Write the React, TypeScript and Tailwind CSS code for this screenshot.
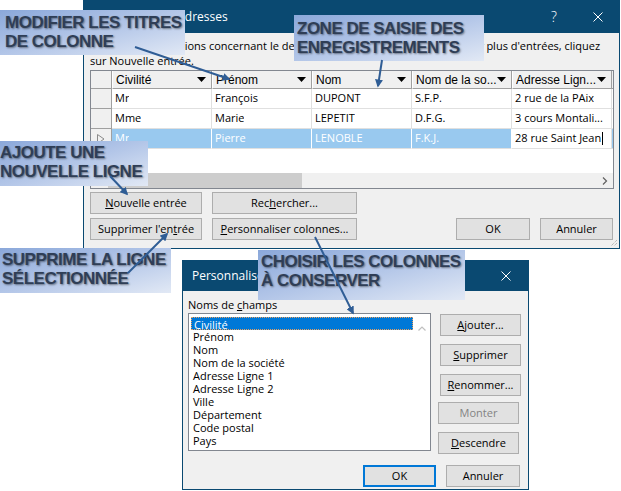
import type { ReactNode } from 'react';

const UI = "font-['Open_Sans','Noto_Sans',sans-serif]";
const CALLOUT =
  "absolute flex flex-col bg-gradient-to-br from-[#8ba8da] via-[#b3c6e8] to-[#e2e9f5] font-['Liberation_Sans',Arial,sans-serif] text-[17px] leading-[19px] font-bold tracking-[-0.5px] whitespace-nowrap text-[#2f3e56] [text-shadow:1px_1px_2px_rgba(0,0,0,0.45)]";

function Btn({
  children,
  className = '',
  disabled = false,
  focused = false,
}: {
  children: ReactNode;
  className?: string;
  disabled?: boolean;
  focused?: boolean;
}) {
  return (
    <div
      className={`flex h-[22px] shrink-0 items-center justify-center bg-[#e1e1e1] text-[11px] ${
        focused ? 'border-2 border-[#0078d7]' : 'border border-[#adadad]'
      } ${disabled ? 'text-[#838383]' : 'text-black'} ${className}`}
    >
      {children}
    </div>
  );
}

function CloseIcon({ size = 10 }: { size?: number }) {
  return (
    <svg width={size} height={size} viewBox="0 0 10 10" className="shrink-0">
      <path d="M0.5 0.5 L9.5 9.5 M9.5 0.5 L0.5 9.5" stroke="white" strokeWidth="1" />
    </svg>
  );
}

function Caret() {
  return (
    <svg width="9" height="5" viewBox="0 0 9 5" className="shrink-0">
      <path d="M0 0 H9 L4.5 5 Z" fill="#000" />
    </svg>
  );
}

const columns = ['Civilité', 'Prénom', 'Nom', 'Nom de la so...', 'Adresse Lign...'];

const rows = [
  ['Mr', 'François', 'DUPONT', 'S.F.P.', '2 rue de la PAix'],
  ['Mme', 'Marie', 'LEPETIT', 'D.F.G.', '3 cours Montali...'],
  ['Mr', 'Pierre', 'LENOBLE', 'F.K.J.', '28 rue Saint Jean'],
];

const fields = [
  'Civilité',
  'Prénom',
  'Nom',
  'Nom de la société',
  'Adresse Ligne 1',
  'Adresse Ligne 2',
  'Ville',
  'Département',
  'Code postal',
  'Pays',
];

function Grid() {
  return (
    <div className="mt-[2px] flex h-[119px] w-[524px] flex-col border border-[#828790] bg-white">
      {/* header */}
      <div className="flex h-[18px] shrink-0 bg-[#f0f0f0]">
        <div className="w-[21px] border-r border-b border-[#a0a0a0]" />
        {columns.map((c) => (
          <div
            key={c}
            className="flex w-[100px] items-center border-r border-b border-l border-r-[#a0a0a0] border-b-[#a0a0a0] border-l-white pr-[5px] pl-[3px] font-['Liberation_Sans_Narrow','Liberation_Sans',sans-serif] text-[12px] text-black"
          >
            <span className="flex-1 truncate">{c}</span>
            <Caret />
          </div>
        ))}
        <div className="flex-1 border-b border-[#a0a0a0]" />
      </div>
      {/* rows */}
      {rows.map((r, i) => {
        const sel = i === 2;
        return (
          <div key={i} className="flex h-[20px] shrink-0">
            <div className="flex w-[21px] items-center justify-center border-r border-b border-[#a0a0a0] bg-[#f0f0f0]">
              {sel && (
                <svg width="8" height="10" viewBox="0 0 8 10">
                  <path d="M0.5 0.5 L7 5 L0.5 9.5 Z" fill="none" stroke="#8a8a8a" />
                </svg>
              )}
            </div>
            {r.map((v, j) => {
              const editing = sel && j === 4;
              return (
                <div
                  key={j}
                  className={`flex w-[100px] items-center border-r border-b pl-[3px] text-[11px] ${
                    editing
                      ? 'border-[#e0e0e0] bg-white text-black'
                      : sel
                        ? 'border-r-white border-b-[#e0e0e0] bg-[#99c9ef] text-white'
                        : 'border-[#e0e0e0] bg-white text-black'
                  }`}
                >
                  <span className="truncate">{v}</span>
                  {editing && <span className="ml-[1px] h-[13px] w-[1px] bg-black" />}
                </div>
              );
            })}
            <div className={`flex-1 border-b border-[#e0e0e0] ${sel ? 'bg-[#99c9ef]' : ''}`} />
          </div>
        );
      })}
      <div className="flex-1" />
      {/* horizontal scrollbar */}
      <div className="flex h-[15px] shrink-0 items-center bg-[#f0f0f0]">
        <div className="w-[17px]" />
        <div className="h-full w-[194px] bg-[#cdcdcd]" />
        <div className="flex-1" />
        <svg width="6" height="8" viewBox="0 0 6 8" className="mr-[5px]">
          <path d="M1 0.5 L4.5 4 L1 7.5" fill="none" stroke="#606060" strokeWidth="1.2" />
        </svg>
      </div>
    </div>
  );
}

function MainWindow() {
  return (
    <div className={`absolute top-0 left-[83px] flex h-[249px] w-[537px] flex-col border-x border-b border-[#0a4971] bg-[#f0f0f0] ${UI}`}>
      <div className="flex h-[33px] shrink-0 items-center bg-[#0a4971] text-white">
        <span className="pl-[6px] text-[12px]">Nouvelle liste d'adresses</span>
        <span className="mr-[36px] ml-auto text-[14px] font-light">?</span>
        <span className="mr-[16px]">
          <CloseIcon />
        </span>
      </div>
      <div className="flex flex-col px-[6px]">
        <p className="pt-[5px] text-[11px] leading-[15px] whitespace-nowrap text-black">
          Tapez les informations concernant le de
          <span className="tracking-[-0.25px]">stinataire dans le tableau. Pour ajouter </span>
          plus d'entrées, cliquez
          <br />
          sur Nouvelle entrée.
        </p>
        <Grid />
        <div className="mt-[3px] flex flex-col gap-[4px]">
          <div className="flex gap-[10px]">
            <Btn className="w-[112px]">
              <u>N</u>ouvelle entrée
            </Btn>
            <Btn className="w-[145px]">
              Rec<u>h</u>ercher...
            </Btn>
          </div>
          <div className="flex gap-[10px]">
            <Btn className="w-[112px]">
              Supprimer l'en<u>t</u>rée
            </Btn>
            <Btn className="w-[145px]">
              <u>P</u>ersonnaliser colonnes...
            </Btn>
            <Btn className="ml-[89px] w-[74px]">OK</Btn>
            <Btn className="w-[73px]">Annuler</Btn>
          </div>
        </div>
      </div>
      <svg width="8" height="8" viewBox="0 0 8 8" className="absolute right-[1px] bottom-[1px]">
        <path d="M7 1 L1 7 M7 4 L4 7" stroke="#a0a0a0" strokeWidth="1" strokeDasharray="1 1" />
      </svg>
    </div>
  );
}

function ColumnsDialog() {
  return (
    <div className={`absolute top-[260px] left-[182px] flex h-[230px] w-[347px] flex-col border-x border-b border-[#0a4971] bg-[#f0f0f0] ${UI}`}>
      <div className="flex h-[31px] shrink-0 items-center bg-[#0a4971] text-white">
        <span className="pl-[9px] text-[12px]">Personnaliser la liste d'adresses</span>
        <span className="mr-[17px] ml-auto">
          <CloseIcon />
        </span>
      </div>
      <div className="flex flex-col pt-[7px] pr-[7px] pl-[5px]">
        <div className="flex items-start">
          <div className="flex flex-col">
            <span className="text-[11px] leading-[14px] text-black">
              Noms de <u>c</u>hamps
            </span>
            <div className="mt-[1px] flex h-[138px] w-[243px] border border-[#828790] bg-white pt-[3px]">
              <div className="flex flex-1 flex-col">
                {fields.map((f, i) => (
                  <div
                    key={f}
                    className={`ml-[2px] h-[13px] pl-[2px] text-[11px] leading-[13px] ${
                      i === 0
                        ? 'border border-dotted border-[#e8a060] bg-[#0078d7] pl-[1px] text-white'
                        : 'text-black'
                    }`}
                  >
                    {f}
                  </div>
                ))}
              </div>
              <div className="flex w-[17px] justify-center pt-[9px]">
                <svg width="8" height="5" viewBox="0 0 8 5">
                  <path d="M0.5 4.5 L4 1 L7.5 4.5" fill="none" stroke="#c0c0c0" strokeWidth="1.2" />
                </svg>
              </div>
            </div>
          </div>
          <div className="mt-[16px] ml-[9px] flex flex-col">
            <Btn className="w-[81px]">
              <u>A</u>jouter...
            </Btn>
            <Btn className="mt-[8px] w-[81px]">
              <u>S</u>upprimer
            </Btn>
            <Btn className="mt-[8px] w-[81px]">
              <u>R</u>enommer...
            </Btn>
            <Btn disabled className="mt-[6px] -ml-[2px] w-[81px]">
              Monter
            </Btn>
            <Btn className="mt-[8px] -ml-[2px] w-[81px]">
              <u>D</u>escendre
            </Btn>
          </div>
        </div>
        <div className="mt-[11px] flex justify-end gap-[10px] pr-[1px]">
          <Btn focused className="w-[73px]">
            OK
          </Btn>
          <Btn className="w-[74px]">Annuler</Btn>
        </div>
      </div>
    </div>
  );
}

function Arrows() {
  return (
    <svg width="621" height="491" viewBox="0 0 621 491" className="pointer-events-none absolute inset-0">
      <defs>
        <marker id="head" viewBox="0 0 10 10" refX="8" refY="5" markerWidth="4" markerHeight="4" orient="auto">
          <path d="M0 0 L10 5 L0 10 Z" fill="#2f5d95" />
        </marker>
      </defs>
      <g stroke="#2f5d95" strokeWidth="2" fill="none" markerEnd="url(#head)">
        <line x1="135" y1="47" x2="229" y2="79" />
        <line x1="382" y1="60" x2="378" y2="86" />
        <line x1="110" y1="176" x2="127" y2="194" />
        <line x1="128" y1="273" x2="167" y2="234" />
        <line x1="315" y1="237" x2="353" y2="313" />
      </g>
    </svg>
  );
}

export default function App() {
  return (
    <div className="relative h-[491px] w-[621px] overflow-hidden bg-white">
      <MainWindow />
      <ColumnsDialog />

      <div className={`${CALLOUT} top-[10px] left-0 h-[45px] w-[185px] pt-[3px] pl-[5px]`}>
        <span>MODIFIER LES TITRES</span>
        <span>DE COLONNE</span>
      </div>
      <div className={`${CALLOUT} top-[15px] left-[294px] h-[46px] w-[190px] pt-[4px] pl-[3px]`}>
        <span>ZONE DE SAISIE DES</span>
        <span>ENREGISTREMENTS</span>
      </div>
      <div className={`${CALLOUT} top-[141px] left-0 h-[45px] w-[148px] pt-[2px] pl-0`}>
        <span>AJOUTE UNE</span>
        <span>NOUVELLE LIGNE</span>
      </div>
      <div className={`${CALLOUT} top-[248px] left-0 h-[45px] w-[171px] pt-[2px] pl-[2px]`}>
        <span>SUPPRIME LA LIGNE</span>
        <span>SÉLECTIONNÉE</span>
      </div>
      <div className={`${CALLOUT} top-[250px] left-[258px] h-[50px] w-[207px] pt-[2px] pl-[3px]`}>
        <span>CHOISIR LES COLONNES</span>
        <span>À CONSERVER</span>
      </div>

      <Arrows />
    </div>
  );
}
